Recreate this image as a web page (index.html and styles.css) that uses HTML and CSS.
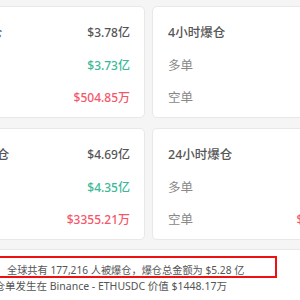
FILE: index.html
```html
<!doctype html>
<html>
	<head>
		<title>爆仓统计</title>
		<link rel="stylesheet" href="styles.css">
	</head>

	<body>
		<div class="page">
			<div class="stats-grid">
				<div class="card">
					<div class="row title"><span>1小时爆仓</span><span class="value">$3.78亿</span></div>
					<div class="row"><span>多单</span><span class="value long">$3.73亿</span></div>
					<div class="row"><span>空单</span><span class="value short">$504.85万</span></div>
				</div>
				<div class="card">
					<div class="row title"><span>4小时爆仓</span><span class="value">$1.12亿</span></div>
					<div class="row"><span>多单</span><span class="value long">$1.05亿</span></div>
					<div class="row"><span>空单</span><span class="value short">$83.24万</span></div>
				</div>
				<div class="card">
					<div class="row title"><span>12小时爆仓</span><span class="value">$4.69亿</span></div>
					<div class="row"><span>多单</span><span class="value long">$4.35亿</span></div>
					<div class="row"><span>空单</span><span class="value short">$3355.21万</span></div>
				</div>
				<div class="card">
					<div class="row title"><span>24小时爆仓</span><span class="value">$5.28亿</span></div>
					<div class="row"><span>多单</span><span class="value long">$4.75亿</span></div>
					<div class="row"><span>空单</span><span class="value short">$532.19万</span></div>
				</div>
			</div>

			<div class="summary">
				<div class="highlight">全球共有 177,216 人被爆仓，爆仓总金额为 $5.28 亿</div>
				<div class="note">最大单笔爆仓单发生在 Binance - ETHUSDC 价值 $1448.17万</div>
			</div>
		</div>
	</body>
</html>
```

FILE: styles.css
```css
:root {
	--bg: #f5f5f5;
	--border: #e8e8e8;
	--text: #555;
	--label: #888;
	--green: #3bb996;
	--red: #f4576a;
	--mark: #ee1111;
}

body {
	margin: 0;
	background-color: var(--bg);
	font-family: "Noto Sans", "Noto Sans CJK SC", sans-serif;
	color: var(--text);
	overflow: hidden;
}

/* page is wider than the window, shifted left */
.page {
	width: 439px;
	margin-left: -71px;
	padding-top: 6px;
}

.stats-grid {
	display: grid;
	grid-template-columns: 216px 216px;
	column-gap: 7px;
	row-gap: 10px;
}

.card {
	background-color: #ffffff;
	border: 1px solid var(--border);
	border-radius: 5px;
	box-sizing: border-box;
	height: 112px;
	padding: 16px 14px 0 15px;
	display: flex;
	flex-direction: column;
	gap: 12.5px;
}

.row {
	display: flex;
	justify-content: space-between;
	align-items: center;
	line-height: 20px;
	font-size: 12.5px;
	color: var(--label);
}

.row.title {
	color: var(--text);
	font-weight: 500;
}

.value {
	font-size: 12px;
	font-weight: 500;
	color: var(--text);
}

.value.long {
	color: var(--green);
}

.value.short {
	color: var(--red);
}

.summary {
	margin-top: 9px;
	background-color: #ffffff;
	border-top: 1px solid var(--border);
	padding-top: 6px;
	height: 60px;
	font-size: 10.5px;
	color: var(--text);
}

.highlight {
	width: 348px;
	height: 22px;
	box-sizing: border-box;
	border: 2px solid var(--mark);
	padding: 6px 0 0 76px;
	font-size: 10.2px;
	line-height: 13px;
	white-space: nowrap;
}

.note {
	padding-left: 13px;
	line-height: 16px;
	white-space: nowrap;
}
```
